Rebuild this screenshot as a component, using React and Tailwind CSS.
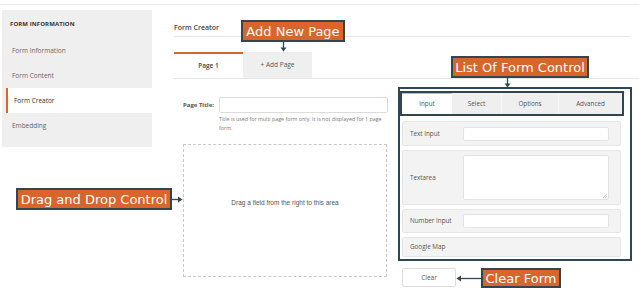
import React from "react";

const ann = "absolute bg-[#d8652b] border-2 border-[#33464e] text-white text-[13px] leading-[17px] whitespace-nowrap flex items-center justify-center";
const annFont = { fontFamily: '"DejaVu Sans", sans-serif' };

function Row({ label, h, children }) {
  return (
    <div className={`flex items-center bg-[#f3f3f3] border border-[#e6e6e6] rounded-[2px] ${h}`}>
      <div className="w-[60px] pl-[7px] text-[6.3px] text-[#555]">{label}</div>
      {children}
    </div>
  );
}

export default function App() {
  return (
    <div className="relative w-[639px] h-[299px] bg-white overflow-hidden" style={{ fontFamily: '"Open Sans", sans-serif' }}>
      <div className="pt-[4px]">
        <div className="border-t border-[#e8e8e8] flex">
          {/* Sidebar */}
          <div className="ml-[2px] mt-[5px] w-[150px] h-[137px] bg-[#efefef] flex flex-col">
            <div className="h-[28px] flex items-center pl-[8px] text-[6px] font-bold text-[#333] tracking-[0.1px]">FORM INFORMATION</div>
            <div className="h-[25px] flex items-center pl-[10px] text-[6.5px] text-[#666]">Form Information</div>
            <div className="h-[25px] flex items-center pl-[10px] text-[6.5px] text-[#666]">Form Content</div>
            <div className="h-[25px] ml-[4px] flex items-center pl-[6px] text-[6.5px] text-[#333] bg-white border-l-2 border-[#d8652b]">Form Creator</div>
            <div className="h-[25px] flex items-center pl-[10px] text-[6.5px] text-[#666]">Embedding</div>
          </div>
          {/* Main */}
          <div className="ml-[22px] w-[458px] flex flex-col">
            <div className="h-[32px] w-[456px] flex items-end pb-[4px] border-b border-[#e6e6e6] text-[7px] leading-[9px] font-semibold text-[#444]">Form Creator</div>
            <div className="mt-[15px] h-[27px] flex border-b border-[#e6e6e6] w-[465px]">
              <div className="w-[69px] border-t-2 border-[#d8652b] flex items-center justify-center text-[6.5px] font-semibold text-[#444]">Page 1</div>
              <div className="w-[69px] bg-[#efefef] flex items-center justify-center text-[6.5px] text-[#555]">+ Add Page</div>
            </div>
            <div className="flex">
              {/* Left */}
              <div className="w-[224px] pl-[9px] pt-[18px] flex flex-col">
                <div className="flex">
                  <div className="w-[36px] pt-[4px] text-[6px] font-bold text-[#555]">Page Title:</div>
                  <div className="flex flex-col">
                    <div className="w-[169px] h-[16px] border border-[#dcdcdc] rounded-[2px] bg-white"></div>
                    <div className="mt-[2px] w-[169px] text-[5.3px] leading-[9px] text-[#777]">Title is used for multi page form only. It is not displayed for 1 page form.</div>
                  </div>
                </div>
                <div className="mt-[11px] w-[204px] h-[133px] pb-[16px] border border-dashed border-[#c8c8c8] flex items-center justify-center text-[6.5px] text-[#555]" style={{ fontFamily: '"Liberation Sans", sans-serif' }}>
                  Drag a field from the right to this area
                </div>
              </div>
              {/* Right */}
              <div className="pt-[8px] flex flex-col">
                <div className="w-[234px] h-[174px] border-2 border-[#2f4650] pt-[2px] flex flex-col">
                  <div className="w-[224px] h-[25px] border-2 border-[#2f4650] flex text-[6.3px] text-[#555] bg-[#efefef]">
                    <div className="w-[50px] bg-white border-t border-[#bbb] flex items-center justify-center">Input</div>
                    <div className="w-[50px] flex items-center justify-center border-r border-[#f7f7f7]">Select</div>
                    <div className="w-[57px] flex items-center justify-center border-r border-[#f7f7f7]">Options</div>
                    <div className="flex-1 flex items-center justify-center">Advanced</div>
                  </div>
                  <div className="mt-[5px] ml-[2px] w-[219px] flex flex-col gap-[4px]">
                    <Row label="Text Input" h="h-[25px]">
                      <div className="w-[146px] h-[14px] bg-white border border-[#e3e3e3] rounded-[2px]"></div>
                    </Row>
                    <Row label="Textarea" h="h-[55px]">
                      <div className="relative w-[146px] h-[45px] bg-white border border-[#e3e3e3] rounded-[2px]">
                        <svg className="absolute right-[1px] bottom-[1px]" width="4" height="4" viewBox="0 0 4 4"><path d="M0 4L4 0M2 4L4 2" stroke="#aaa" strokeWidth="0.6" /></svg>
                      </div>
                    </Row>
                    <Row label="Number Input" h="h-[24px]">
                      <div className="w-[146px] h-[14px] bg-white border border-[#e3e3e3] rounded-[2px]"></div>
                    </Row>
                    <Row label="Google Map" h="h-[20px]" />
                  </div>
                </div>
                <div className="mt-[7px] ml-[4px] w-[54px] h-[19px] border border-[#dcdcdc] rounded-[2px] bg-white flex items-center justify-center text-[6.5px] text-[#555]">Clear</div>
              </div>
            </div>
          </div>
        </div>
      </div>

      {/* Annotations */}
      <div className={ann} style={{ ...annFont, left: 241, top: 20, width: 104, height: 22 }}>Add New Page</div>
      <svg className="absolute left-[279px] top-[42px]" width="9" height="10" viewBox="0 0 9 10">
        <path d="M4.5 0V8" stroke="#33464e" strokeWidth="1.3" />
        <path d="M1.5 5.5L4.5 9.5L7.5 5.5Z" fill="#33464e" />
      </svg>

      <div className={ann} style={{ ...annFont, left: 451, top: 56, width: 138, height: 22 }}>List Of Form Control</div>
      <svg className="absolute left-[503px] top-[78px]" width="9" height="10" viewBox="0 0 9 10">
        <path d="M4.5 0V8" stroke="#33464e" strokeWidth="1.3" />
        <path d="M1.5 5.5L4.5 9.5L7.5 5.5Z" fill="#33464e" />
      </svg>

      <div className={ann} style={{ ...annFont, left: 16, top: 188, width: 156, height: 22 }}>Drag and Drop Control</div>
      <svg className="absolute left-[172px] top-[195px]" width="11" height="9" viewBox="0 0 11 9">
        <path d="M0 4.5H9" stroke="#33464e" strokeWidth="1.3" />
        <path d="M6 1.5L10.5 4.5L6 7.5Z" fill="#33464e" />
      </svg>

      <div className={ann} style={{ ...annFont, left: 481, top: 268, width: 80, height: 20 }}>Clear Form</div>
      <svg className="absolute left-[456px] top-[274px]" width="25" height="9" viewBox="0 0 25 9">
        <path d="M2 4.5H25" stroke="#33464e" strokeWidth="1.3" />
        <path d="M5 1.5L0.5 4.5L5 7.5Z" fill="#33464e" />
      </svg>
    </div>
  );
}
